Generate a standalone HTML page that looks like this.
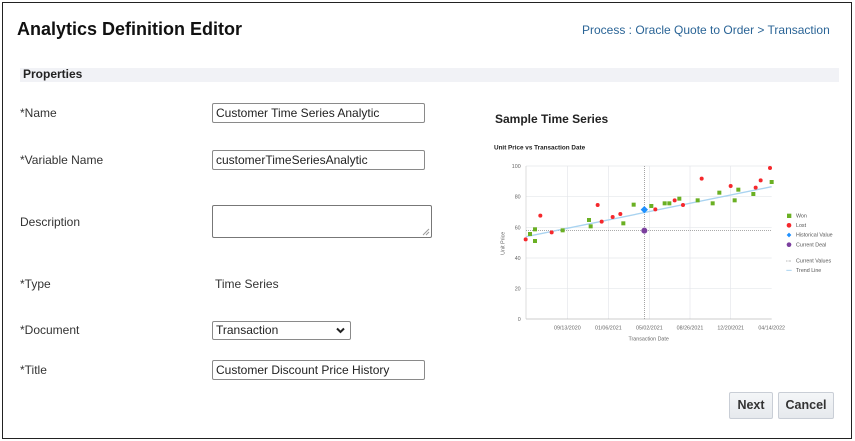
<!DOCTYPE html>
<html><head><meta charset="utf-8"><style>
*{box-sizing:border-box;margin:0;padding:0}
body{width:855px;height:441px;background:#fff;font-family:"Liberation Sans",Arial,sans-serif;color:#333;position:relative;overflow:hidden}
.frame{position:absolute;left:2px;top:2px;width:850px;height:437px;border:1px solid #222}
.a{position:absolute;white-space:nowrap}
.lbl{font-size:12px;color:#333;left:20px}
.inp{position:absolute;border:1px solid #8a8a8a;border-radius:2px;background:#fff;font-size:12px;color:#222;padding-left:3px;line-height:19px}
.btn{position:absolute;top:392px;height:27px;border:1px solid #c9ced6;border-radius:2px;background:linear-gradient(#f4f6f8,#e6e9ed);font-weight:bold;font-size:12.5px;color:#333;text-align:center;line-height:25px}
</style></head><body>
<div class="frame"></div>
<div class="a" style="left:17px;top:19px;font-size:18px;font-weight:bold;color:#111">Analytics Definition Editor</div>
<div class="a" style="left:582px;top:23px;font-size:12px;color:#2a6496">Process : Oracle Quote to Order &gt; Transaction</div>
<div class="a" style="left:20px;top:68px;width:819px;height:14px;background:#f1f2f6"></div>
<div class="a" style="left:23px;top:67px;font-size:12px;font-weight:bold;color:#222">Properties</div>

<div class="a lbl" style="top:106px">*Name</div>
<div class="a lbl" style="top:153px">*Variable Name</div>
<div class="a lbl" style="top:215px">Description</div>
<div class="a lbl" style="top:277px">*Type</div>
<div class="a lbl" style="top:323px">*Document</div>
<div class="a lbl" style="top:363px">*Title</div>

<div class="inp" style="left:212px;top:103px;width:213px;height:20px">Customer Time Series Analytic</div>
<div class="inp" style="left:212px;top:150px;width:213px;height:20px">customerTimeSeriesAnalytic</div>
<div class="inp" style="left:212px;top:205px;width:220px;height:33px;border-color:#777"><svg style="position:absolute;right:1px;bottom:1px" width="8" height="8"><path d="M1 7L7 1M4 7L7 4" stroke="#999" stroke-width="1"/></svg></div>
<div class="a" style="left:215px;top:277px;font-size:12px;color:#333">Time Series</div>
<div class="inp" style="left:212px;top:321px;width:139px;height:19px;color:#222;line-height:17px">Transaction<svg style="position:absolute;right:5px;top:5px" width="9" height="7"><path d="M1 1.5L4.5 5L8 1.5" stroke="#222" stroke-width="2" fill="none"/></svg></div>
<div class="inp" style="left:212px;top:360px;width:213px;height:20px">Customer Discount Price History</div>

<div class="a" style="left:495px;top:112px;font-size:12px;font-weight:bold;color:#222">Sample Time Series</div>

<svg class="a" style="left:490px;top:140px" width="350" height="210" viewBox="0 0 1050 630" font-family="Liberation Sans, Arial, sans-serif">
<text x="12" y="28" font-size="19" font-weight="bold" fill="#222">Unit Price vs Transaction Date</text>
<g stroke="#e4e6ea" stroke-width="2">
<line x1="108" y1="78" x2="845" y2="78"/><line x1="108" y1="170" x2="845" y2="170"/><line x1="108" y1="262" x2="845" y2="262"/><line x1="108" y1="354" x2="845" y2="354"/><line x1="108" y1="446" x2="845" y2="446"/>
<line x1="232" y1="78" x2="232" y2="537"/><line x1="355" y1="78" x2="355" y2="537"/><line x1="478" y1="78" x2="478" y2="537"/><line x1="600" y1="78" x2="600" y2="537"/><line x1="722" y1="78" x2="722" y2="537"/>
</g>
<line x1="108" y1="537" x2="845" y2="537" stroke="#bbb" stroke-width="2"/>
<line x1="108" y1="78" x2="108" y2="537" stroke="#ccc" stroke-width="2"/>
<g font-size="16" fill="#666" text-anchor="end"><text x="92" y="84">100</text><text x="92" y="176">80</text><text x="92" y="268">60</text><text x="92" y="360">40</text><text x="92" y="452">20</text><text x="92" y="543">0</text></g>
<g font-size="16" fill="#666" text-anchor="middle"><text x="232" y="568">09/13/2020</text><text x="355" y="568">01/06/2021</text><text x="478" y="568">05/02/2021</text><text x="600" y="568">08/26/2021</text><text x="722" y="568">12/20/2021</text><text x="845" y="568">04/14/2022</text>
<text x="476" y="602">Transaction Date</text></g>
<text x="44" y="310" font-size="16" fill="#666" text-anchor="middle" transform="rotate(-90 44 310)">Unit Price</text>
<line x1="463" y1="78" x2="463" y2="537" stroke="#777" stroke-width="2" stroke-dasharray="3,3"/>
<line x1="108" y1="272" x2="845" y2="272" stroke="#777" stroke-width="2" stroke-dasharray="3,3"/>
<line x1="108" y1="290" x2="845" y2="140" stroke="#a9d3f0" stroke-width="4"/>
<g fill="#6ab023">
<rect x="114" y="276" width="12" height="12"/><rect x="129" y="262" width="12" height="12"/><rect x="129" y="297" width="12" height="12"/><rect x="212" y="265" width="12" height="12"/><rect x="291" y="234" width="12" height="12"/><rect x="296" y="253" width="12" height="12"/><rect x="394" y="244" width="12" height="12"/><rect x="425" y="188" width="12" height="12"/><rect x="478" y="192" width="12" height="12"/><rect x="518" y="184" width="12" height="12"/><rect x="532" y="184" width="12" height="12"/><rect x="562" y="170" width="12" height="12"/><rect x="617" y="175" width="12" height="12"/><rect x="662" y="184" width="12" height="12"/><rect x="682" y="152" width="12" height="12"/><rect x="728" y="175" width="12" height="12"/><rect x="739" y="143" width="12" height="12"/><rect x="784" y="156" width="12" height="12"/><rect x="839" y="120" width="12" height="12"/>
</g>
<g fill="#f5282c">
<circle cx="107" cy="298" r="6"/><circle cx="151" cy="227" r="6"/><circle cx="185" cy="277" r="6"/><circle cx="323" cy="195" r="6"/><circle cx="335" cy="245" r="6"/><circle cx="368" cy="231" r="6"/><circle cx="391" cy="222" r="6"/><circle cx="496" cy="208" r="6"/><circle cx="554" cy="181" r="6"/><circle cx="579" cy="195" r="6"/><circle cx="635" cy="116" r="6"/><circle cx="722" cy="138" r="6"/><circle cx="797" cy="143" r="6"/><circle cx="812" cy="121" r="6"/><circle cx="840" cy="84" r="6"/>
</g>
<path d="M463 198L474 209L463 220L452 209Z" fill="#1e90ff"/>
<circle cx="463" cy="272" r="9" fill="#7b3f9e"/>
<g font-size="16" fill="#555">
<rect x="891" y="221" width="13" height="13" fill="#6ab023"/><text x="918" y="233">Won</text>
<circle cx="897" cy="256" r="7" fill="#f5282c"/><text x="918" y="261">Lost</text>
<path d="M897 278L904 285L897 292L890 285Z" fill="#1e90ff"/><text x="918" y="290">Historical Value</text>
<circle cx="897" cy="314" r="7" fill="#7b3f9e"/><text x="918" y="319">Current Deal</text>
<line x1="889" y1="363" x2="905" y2="363" stroke="#777" stroke-width="2" stroke-dasharray="2,2"/><text x="918" y="368">Current Values</text>
<line x1="889" y1="391" x2="905" y2="391" stroke="#a9d3f0" stroke-width="3"/><text x="918" y="396">Trend Line</text>
</g>
</svg>

<div class="btn" style="left:729px;width:44px">Next</div>
<div class="btn" style="left:778px;width:56px">Cancel</div>
</body></html>
